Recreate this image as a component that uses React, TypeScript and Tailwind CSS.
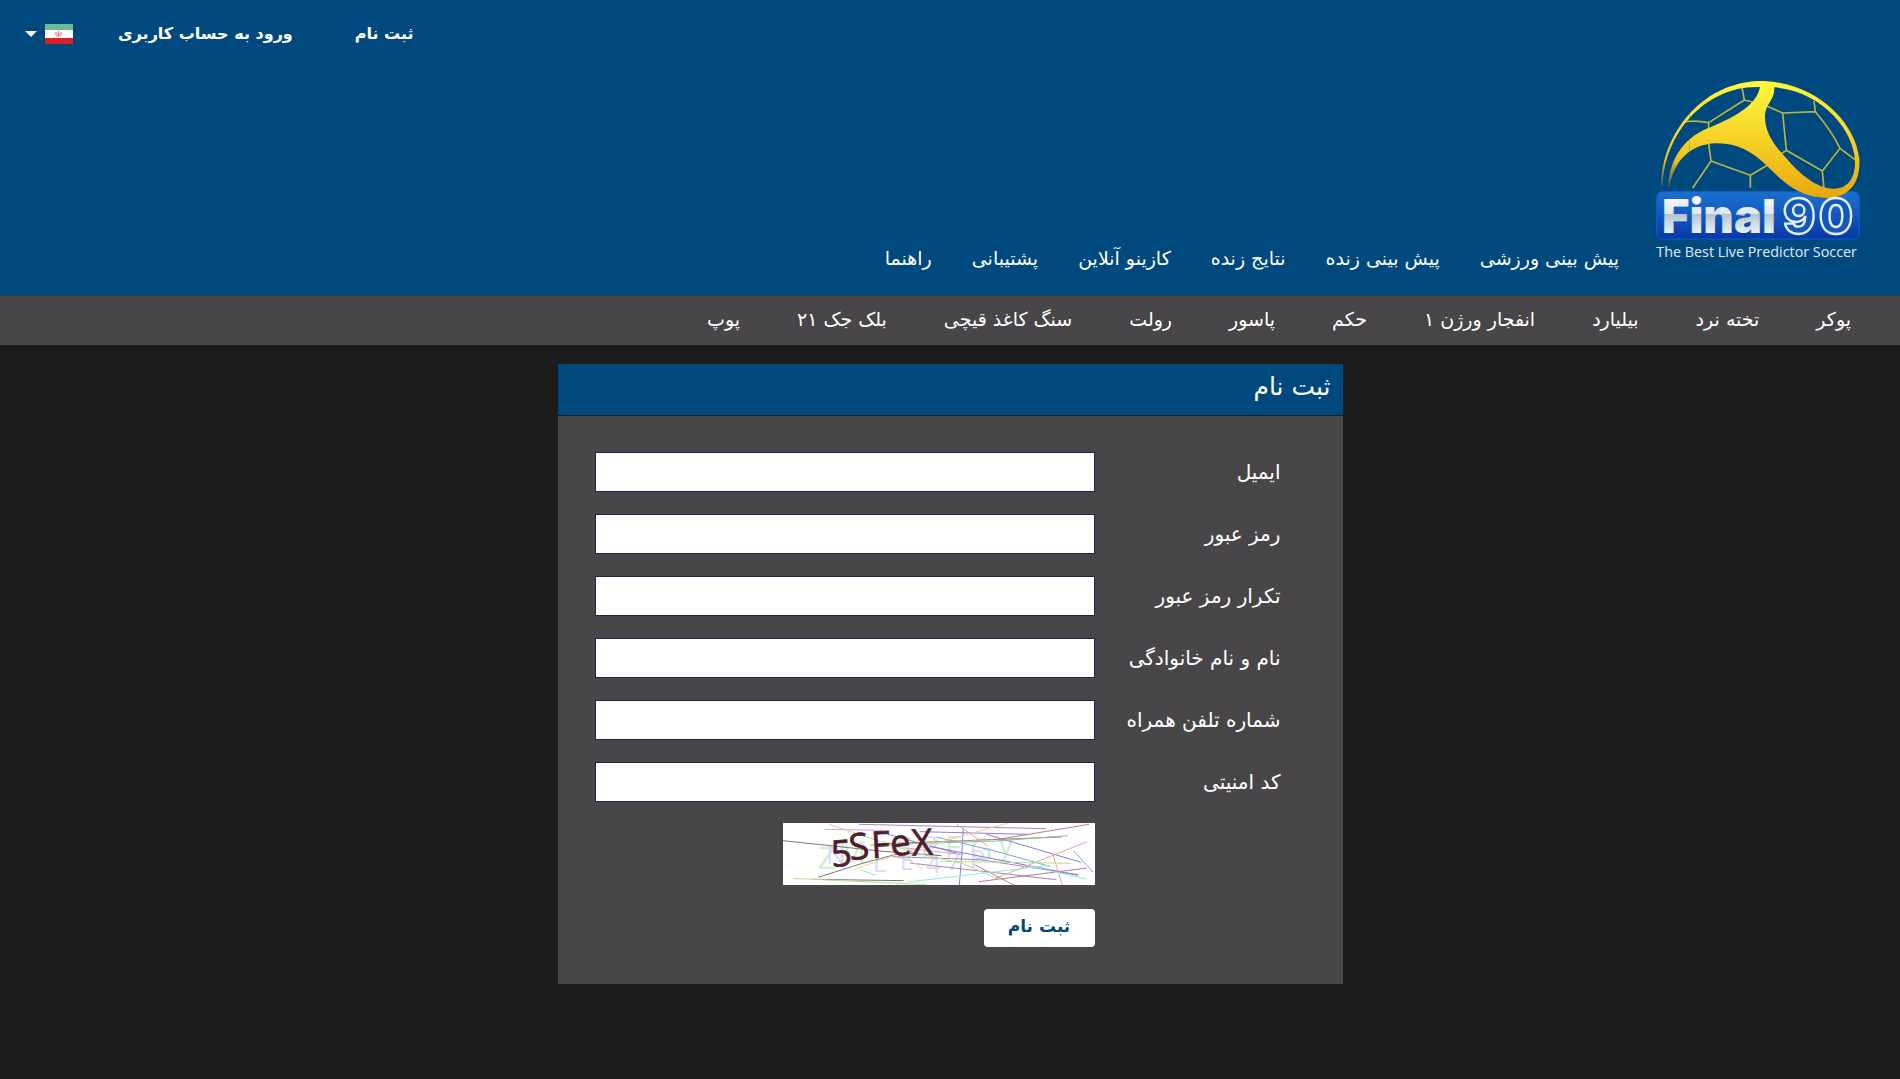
import React from "react";

const topLinks = ["ورود به حساب کاربری", "ثبت نام"];

const mainLinks = [
  "پیش بینی ورزشی",
  "پیش بینی زنده",
  "نتایج زنده",
  "کازینو آنلاین",
  "پشتیبانی",
  "راهنما",
];

const gameLinks = [
  "پوکر",
  "تخته نرد",
  "بیلیارد",
  "انفجار ورژن ۱",
  "حکم",
  "پاسور",
  "رولت",
  "سنگ کاغذ قیچی",
  "بلک جک ۲۱",
  "پوپ",
];

const fields = [
  { id: "email", label: "ایمیل", type: "email" },
  { id: "password", label: "رمز عبور", type: "password" },
  { id: "password2", label: "تکرار رمز عبور", type: "password" },
  { id: "name", label: "نام و نام خانوادگی", type: "text" },
  { id: "phone", label: "شماره تلفن همراه", type: "tel" },
  { id: "captcha", label: "کد امنیتی", type: "text" },
];

const Logo = () => (
  <svg viewBox="0 0 612 546" className="block h-[182px] w-[204px]" direction="ltr" role="img" aria-label="Final90">
    <defs>
      <linearGradient id="gold" x1="0" y1="0" x2="0" y2="350" gradientUnits="userSpaceOnUse">
        <stop offset="0" stopColor="#fff83c" />
        <stop offset="0.45" stopColor="#f7d72a" />
        <stop offset="1" stopColor="#e8a70c" />
      </linearGradient>
      <linearGradient id="plate" x1="0" y1="0" x2="0" y2="1">
        <stop offset="0" stopColor="#1b70cf" />
        <stop offset="0.5" stopColor="#1258be" />
        <stop offset="1" stopColor="#0a37a5" />
      </linearGradient>
      <linearGradient id="steel" x1="0" y1="356" x2="0" y2="458" gradientUnits="userSpaceOnUse">
        <stop offset="0" stopColor="#f4f7fa" />
        <stop offset="0.44" stopColor="#dfe6ec" />
        <stop offset="0.46" stopColor="#b3c4d0" />
        <stop offset="1" stopColor="#e6f1f8" />
      </linearGradient>
      <linearGradient id="fade" x1="0" y1="240" x2="0" y2="322" gradientUnits="userSpaceOnUse">
        <stop offset="0" stopColor="#fff" />
        <stop offset="1" stopColor="#333" />
      </linearGradient>
      <mask id="rim" maskUnits="userSpaceOnUse" x="0" y="-10" width="612" height="546">
        <rect y="-10" width="100" height="546" fill="url(#fade)" />
        <rect x="100" y="-10" width="512" height="546" fill="#fff" />
      </mask>
    </defs>
    <rect x="2" y="335" width="608" height="142" rx="18" fill="url(#plate)" stroke="#0f5fd0" strokeWidth="3" />
    <g fill="none" stroke="#b9b53a" strokeWidth="5">
      <path d="M258 22L265 60L158 128Q120 120 84 126M158 128V148M158 190L165 243L110 324M165 243L283 286V323M283 286L335 255M265 60L290 66M330 77L380 99L391 211L365 228M391 211L499 273L504 327M499 273L552 205L600 241M552 205C535 168 510 133 478 95L380 99M478 95L474 63" />
    </g>
    <path
      mask="url(#rim)"
      fill="url(#gold)"
      d="M16 318C14 173 130 8 310 3C480 3 600 128 610 238C614 313 575 353 515 354C420 352 375 298 328 253C290 217 245 189 180 190C105 193 55 238 40 323L36 321C42 228 90 168 165 141C245 107 302 73 312 21C150 15 25 158 20 318ZM355 22C356 63 330 68 327 108C326 148 345 188 390 233C430 283 490 329 535 326C580 325 598 288 597 243C594 153 500 34 355 22Z"
    />
    <text x="18" y="460" fontFamily="Inter, sans-serif" fontWeight="900" fontSize="141" fill="url(#steel)">
      Final
    </text>
    <text x="380 488" y="461" fontFamily="Inter, sans-serif" fontWeight="800" fontSize="149" fill="#1258be" stroke="#e3f0fa" strokeWidth="7">
      90
    </text>
    <text x="1" y="531" fontFamily="Open Sans, Noto Sans, sans-serif" fontSize="43" fill="#e2edf5">
      The Best Live Predictor Soccer
    </text>
  </svg>
);

const Flag = () => (
  <svg viewBox="0 0 28 20" className="h-5 w-7" aria-hidden="true">
    <rect width="28" height="20" fill="#fff" />
    <rect width="28" height="6" fill="#6fb892" />
    <rect y="14" width="28" height="6" fill="#dc1f26" />
    <g fill="none" stroke="#ea7e80" strokeWidth="1">
      <path d="M13.500 7V13M11 8Q9.500 11 12.500 12.500M16 8Q17.500 11 14.500 12.500M12 8.500Q11.500 11 13.500 12M15 8.500Q15.500 11 13.500 12" />
    </g>
  </svg>
);

const Captcha = () => (
  <svg viewBox="0 0 936 186" className="block h-[62px] w-[312px] bg-white" direction="ltr" role="img" aria-label="captcha">
    <g fontFamily="Open Sans, Noto Sans, sans-serif">
      <text fill="#cfeed2" fontSize="94" x="104 165 340 412 485 560 645" y="137 120 108 104 106 112 96">
        ZMSPFGy
      </text>
      <text fill="#dcdaf4" fontSize="76" x="130 270 350 430 490 560" y="122 148 140 150 140 135">
        NLE47P
      </text>
    </g>
    <g fill="none" strokeWidth="3">
      <path stroke="#777" d="M0 53L290 84L475 98M105 163L235 122L350 91M90 169L362 173" />
      <path stroke="#a685c4" d="M228 4L790 17M330 101L590 110L886 155M380 120L820 170" />
      <path stroke="#8580d8" d="M541 15L536 98L529 186M410 26L735 34M610 34L895 118M440 70L885 157M300 30L520 90" />
      <path stroke="#78a8e6" d="M460 42L640 85L800 130M872 84L930 147" />
      <path stroke="#c27a8c" d="M640 50L918 4M575 125L692 186M300 62L836 42M588 176L912 135" />
      <path stroke="#7cc490" d="M262 66L640 54L854 38" />
      <path stroke="#dca896" d="M522 4L614 69M635 167L912 56M810 95L838 186" />
      <path stroke="#eed09c" d="M210 140L350 92L675 0M300 52L420 140" />
      <path stroke="#b8df8c" d="M138 4L390 88L540 122L650 170M470 115L865 121M30 166L430 185" />
      <path stroke="#98e6da" d="M375 177L800 127M232 141L278 156M740 130L910 168" />
      <path stroke="#e59ae0" d="M124 19L300 22M370 75L540 95" />
    </g>
    <text
      fontFamily="Open Sans, Noto Sans, sans-serif"
      fontSize="110"
      fill="#521b2e"
      stroke="#521b2e"
      strokeWidth="2"
      x="146 202 266 326 388"
      y="132 112 105 101 98"
      rotate="-4 -6 -3 -8 -3"
    >
      5SFeX
    </text>
  </svg>
);

const Header = () => (
  <header className="bg-[#00497e] text-white">
    <div className="flex h-20 flex-row-reverse items-start justify-start pl-[25px] pt-4 text-base">
      <button type="button" className="flex h-9 items-center gap-2" aria-label="زبان">
        <Flag />
        <svg viewBox="0 0 12 6" className="h-[6px] w-3" aria-hidden="true">
          <path d="M0 0H12L6 6Z" fill="#fff" />
        </svg>
      </button>
      <nav className="flex h-9 flex-row-reverse items-center gap-[62px] pl-[45px] font-bold">
        {topLinks.map((item) => (
          <a key={item} href="#">
            {item}
          </a>
        ))}
      </nav>
    </div>
    <div className="flex h-[215px] items-start pr-10">
      <a href="#">
        <Logo />
      </a>
      <nav className="mr-[37px] mt-[164px] flex gap-10 text-[19px]">
        {mainLinks.map((item) => (
          <a key={item} href="#" className="whitespace-nowrap">
            {item}
          </a>
        ))}
      </nav>
    </div>
  </header>
);

const RegisterForm = () => (
  <main className="mx-auto mt-[19px] w-full max-w-[785px]">
    <h1 className="mb-px flex h-[51px] items-center bg-[#00497e] px-3 pb-1.5 text-[25px]">ثبت نام</h1>
    <form
      className="bg-[#494649] pb-[37px] pl-[37px] pr-[62px] pt-9"
      onSubmit={(e) => e.preventDefault()}
    >
      <div className="flex flex-col gap-[22px]">
        {fields.map((field) => (
          <div key={field.id} className="flex h-10 items-center justify-between">
            <label htmlFor={field.id} className="text-xl">
              {field.label}
            </label>
            <input
              id={field.id}
              type={field.type}
              className="h-10 w-[500px] border border-[#1f2549] bg-white px-3 text-black"
            />
          </div>
        ))}
      </div>
      <div className="mr-auto mt-[21px] flex w-[500px] flex-col items-start gap-6">
        <Captcha />
        <button
          type="submit"
          className="h-[38px] w-[111px] rounded bg-white pb-0.5 text-[17px] font-bold text-[#00497e]"
        >
          ثبت نام
        </button>
      </div>
    </form>
  </main>
);

const App = () => {
  return (
    <div dir="rtl" className="min-h-screen bg-[#1c1c1c] pb-10 font-['DejaVu_Sans',sans-serif] text-white">
      <Header />
      <nav className="flex h-[50px] items-center gap-[57px] border-t border-[#3a373a] bg-[#494649] pb-0.5 pr-[49px] text-[19px]">
        {gameLinks.map((item) => (
          <a key={item} href="#" className="whitespace-nowrap">
            {item}
          </a>
        ))}
      </nav>
      <RegisterForm />
    </div>
  );
};

export default App;
